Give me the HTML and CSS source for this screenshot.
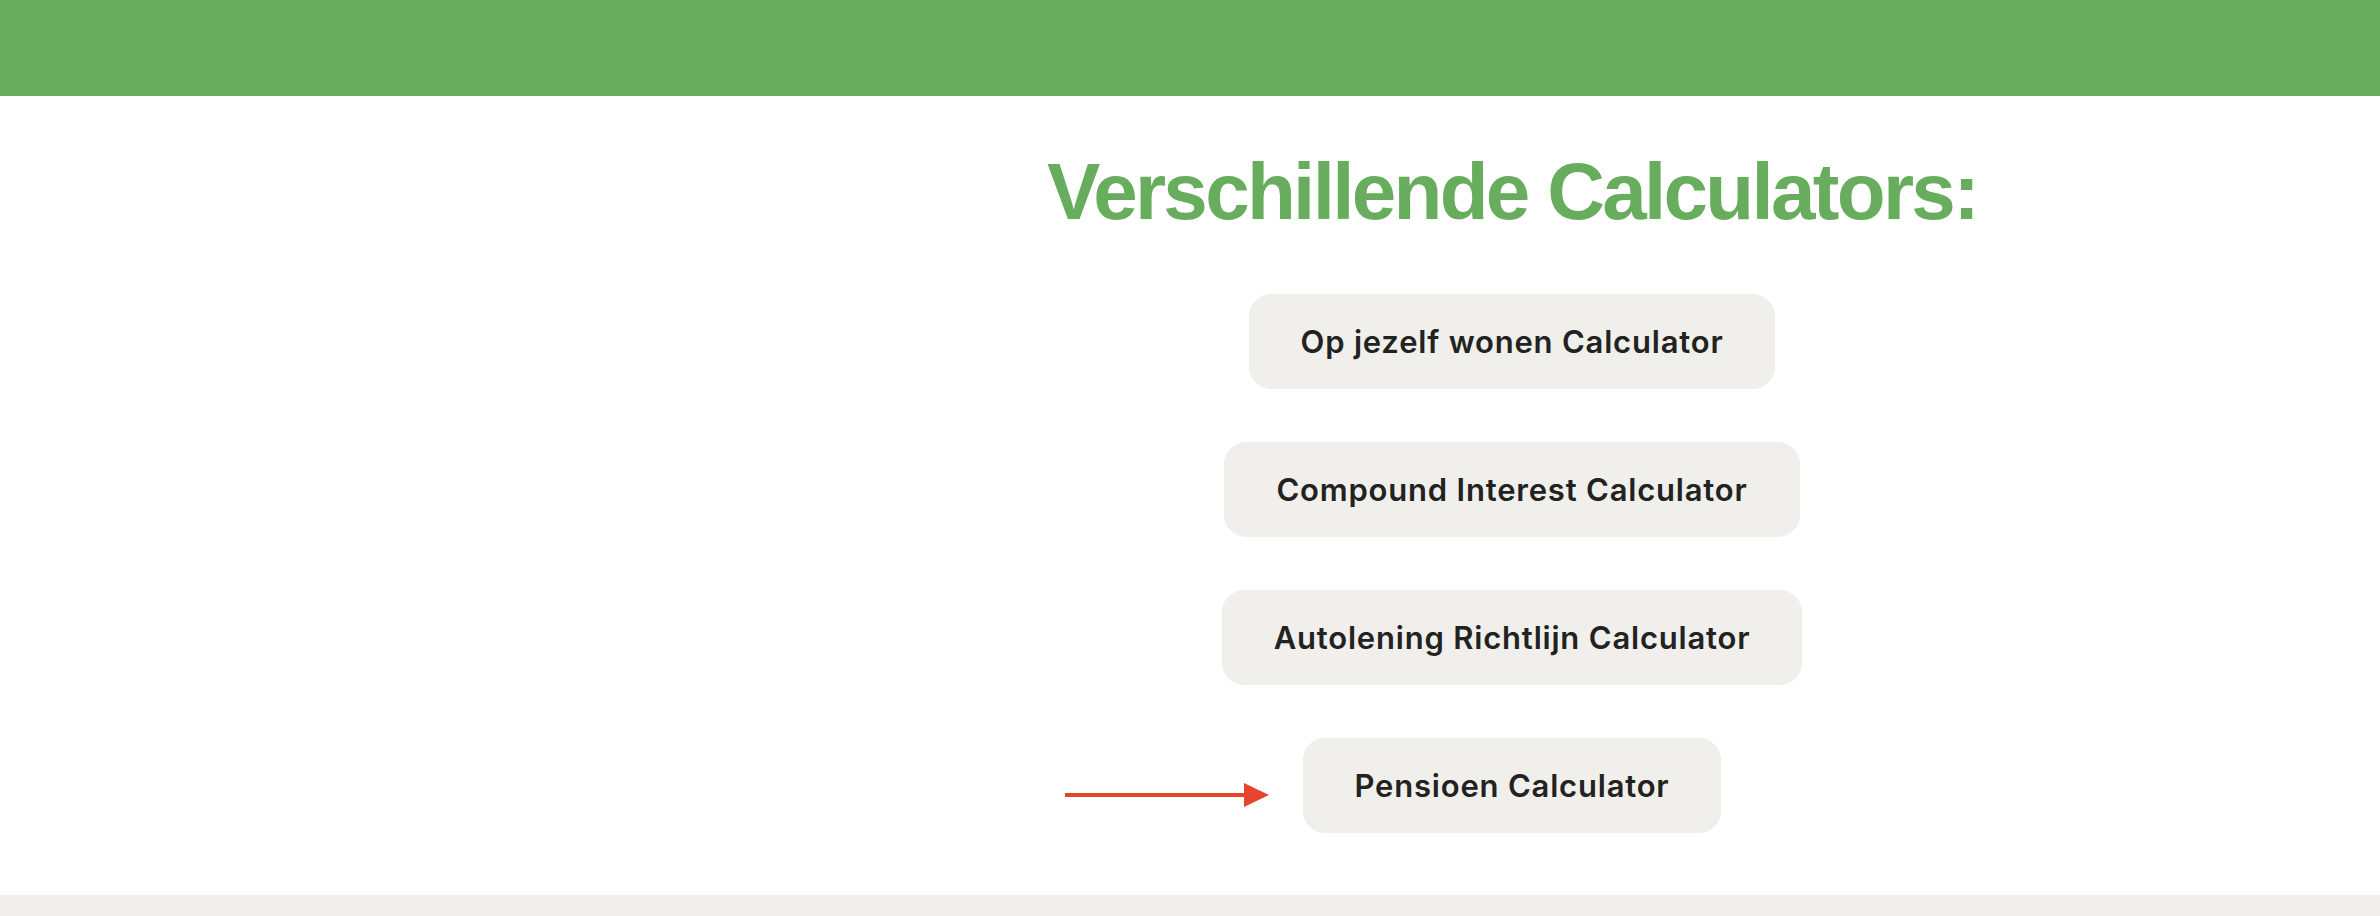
FILE: index.html
```html
<!DOCTYPE html>
<html lang="nl">
  <head>
    <meta charset="UTF-8" />
    <meta name="viewport" content="width=device-width, initial-scale=1.0" />
    <title>Calculators</title>
    <link rel="stylesheet" href="styles.css">
  </head>
  <body>
    <header class="top-bar"></header>

    <main class="page">
      <aside class="side"></aside>

      <section class="calc-list">
        <h1 class="calc-title">Verschillende Calculators:</h1>
        <a href="#" class="calc-btn">Op jezelf wonen Calculator</a>
        <a href="#" class="calc-btn">Compound Interest Calculator</a>
        <a href="#" class="calc-btn">Autolening Richtlijn Calculator</a>
        <a href="#" class="calc-btn calc-btn--marked">
          Pensioen Calculator
          <!-- pijl die naar de nieuwe calculator wijst -->
          <svg class="marker-arrow" width="204" height="26" viewBox="0 0 204 26">
            <rect x="0" y="11" width="180" height="4" fill="#e8442b" />
            <polygon points="179,1 204,13 179,25" fill="#e8442b" />
          </svg>
        </a>
      </section>
    </main>

    <footer class="bottom-bar"></footer>
  </body>
</html>
```

FILE: styles.css
```css
* {
  box-sizing: border-box;
}

body {
  margin: 0;
  background-color: #fff;
  font-family: Inter, "Noto Sans", sans-serif;
  color: #222220;
}

.top-bar {
  height: 96px;
  background-color: #68ad5e;
}

.page {
  display: grid;
  grid-template-columns: 644px 1fr;
}

.calc-list {
  display: flex;
  flex-direction: column;
  align-items: center;
  gap: 53px;
  padding: 56px 0 62px;
}

.calc-title {
  margin: 0 0 9px;
  font-family: "Liberation Sans", Arial, sans-serif;
  font-size: 80px;
  font-weight: 700;
  line-height: 1;
  letter-spacing: -2.7px;
  color: #68ad5e;
}

.calc-btn {
  position: relative;
  display: block;
  padding: 30px 52px;
  border-radius: 22px;
  background-color: #f0efeb;
  font-size: 31px;
  font-weight: 600;
  line-height: 35px;
  letter-spacing: 0.8px;
  color: #222220;
  text-decoration: none;
}

/* pijl staat los naast de knop */
.marker-arrow {
  position: absolute;
  top: 50%;
  right: calc(100% + 34px);
  margin-top: -4px;
}

.bottom-bar {
  height: 200px;
  background-color: #f0efeb;
}
```
